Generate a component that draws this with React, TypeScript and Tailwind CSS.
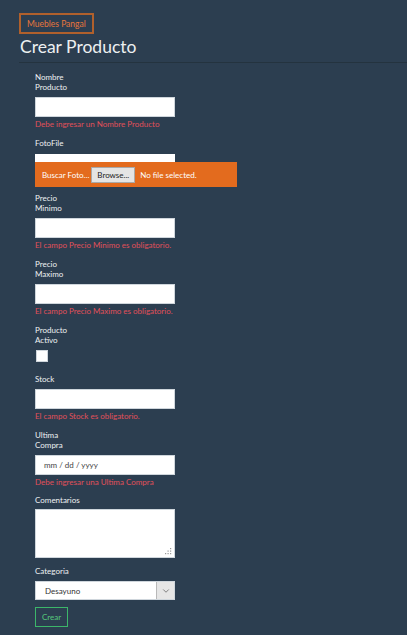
import { ChevronDown } from "lucide-react";

const font = { fontFamily: "Lato, 'Open Sans', sans-serif" };

function Label({ lines }: { lines: string[] }) {
  return (
    <div className="text-[8px] leading-[10px] text-[#eef1f3]">
      {lines.map((l) => (
        <div key={l}>{l}</div>
      ))}
    </div>
  );
}

function ErrorText({ children }: { children: string }) {
  return <div className="mt-[2px] text-[8px] leading-[10px] text-[#e0505a]">{children}</div>;
}

function TextField({ lines, error }: { lines: string[]; error: string }) {
  return (
    <div className="mb-[9px]">
      <Label lines={lines} />
      <input type="text" className="mt-[5px] block h-[20px] w-[140px] border border-[#cfd6dc] bg-white outline-none" />
      <ErrorText>{error}</ErrorText>
    </div>
  );
}

export default function App() {
  return (
    <div style={font} className="min-h-[635px] w-full bg-[#2c3e50] pt-[13px] pl-[19px]">
      <div className="flex h-[21px] w-fit items-center border-2 border-[#b0602c] px-[6px]">
        <span className="text-[8.5px] leading-[10px] text-[#e8763c]">Muebles Pangal</span>
      </div>
      <h1 className="mt-[2px] pl-[1px] text-[17.5px] leading-[22px] text-[#ecf0f1]">Crear Producto</h1>
      <div className="mt-[4px] h-px bg-[#24333f]" />

      <div className="pl-[16px] pt-[9px]">
        <TextField lines={["Nombre", "Producto"]} error="Debe ingresar un Nombre Producto" />

        <div className="mb-[6px]">
          <Label lines={["FotoFile"]} />
          <div className="mt-[6px] h-[8px] w-[140px] bg-white" />
          <div className="flex h-[25px] w-[202px] items-center bg-[#e36b1e] pl-[7px] text-[8px] text-white">
            <span>Buscar Foto...</span>
            <button className="ml-[2px] h-[16px] border border-[#a9a9a9] bg-[#e4e4e4] px-[5px] text-[8px] text-[#222]">
              Browse...
            </button>
            <span className="ml-[5px]">No file selected.</span>
          </div>
        </div>

        <TextField lines={["Precio", "Minimo"]} error="El campo Precio Minimo es obligatorio." />
        <TextField lines={["Precio", "Maximo"]} error="El campo Precio Maximo es obligatorio." />

        <div className="mb-[12px]">
          <Label lines={["Producto", "Activo"]} />
          <div className="ml-[1px] mt-[5px] h-[12px] w-[12px] border border-[#cfd6dc] bg-white" />
        </div>

        <TextField lines={["Stock"]} error="El campo Stock es obligatorio." />

        <div className="mb-[8px]">
          <Label lines={["Ultima", "Compra"]} />
          <div className="mt-[5px] flex h-[20px] w-[140px] items-center border border-[#cfd6dc] bg-white pl-[8px] text-[8px] text-[#444]">
            mm / dd / yyyy
          </div>
          <ErrorText>Debe ingresar una Ultima Compra</ErrorText>
        </div>

        <div className="mb-[8px]">
          <Label lines={["Comentarios"]} />
          <div className="relative mt-[4px] h-[49px] w-[140px]">
            <textarea className="block h-full w-full resize-none border border-[#cfd6dc] bg-white outline-none" />
            <svg className="absolute bottom-[3px] right-[3px]" width="7" height="7" viewBox="0 0 7 7">
              <g fill="#9a9a9a">
                <rect x="5" y="0" width="1.2" height="1.2" />
                <rect x="2.5" y="2.5" width="1.2" height="1.2" />
                <rect x="5" y="2.5" width="1.2" height="1.2" />
                <rect x="0" y="5" width="1.2" height="1.2" />
                <rect x="2.5" y="5" width="1.2" height="1.2" />
                <rect x="5" y="5" width="1.2" height="1.2" />
              </g>
            </svg>
          </div>
        </div>

        <div className="mb-[7px]">
          <Label lines={["Categoria"]} />
          <div className="mt-[5px] flex h-[19px] w-[140px] items-center border border-[#cfd6dc] bg-white">
            <span className="flex-1 pl-[9px] text-[8px] text-[#333]">Desayuno</span>
            <span className="flex h-full w-[18px] items-center justify-center border-l border-[#b9b9b9] bg-[#e6e6e6]">
              <ChevronDown size={10} strokeWidth={1.5} className="text-[#444]" />
            </span>
          </div>
        </div>

        <button className="block h-[20px] border border-[#3cb66a] px-[6px] text-[8px] text-[#56c97c]">Crear</button>
      </div>
    </div>
  );
}
